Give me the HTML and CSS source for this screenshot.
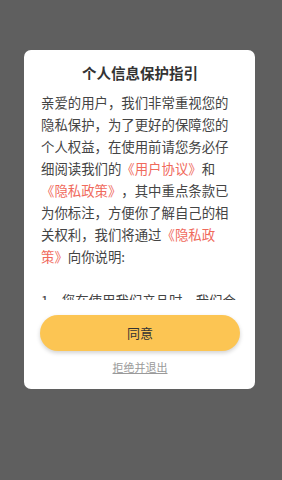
FILE: index.html
```
<!DOCTYPE html>
<html lang="zh-CN">
<head>
    <meta charset="utf-8">
    <title>个人信息保护指引</title>
    <link rel="stylesheet" href="styles.css">
</head>
<body>
<div class="dialog">
    <div class="title">个人信息保护指引</div>
    <div class="content">
        亲爱的用户，我们非常重视您的隐私保护，为了更好的保障您的个人权益，在使用前请您务必仔细阅读我们的<span class="link">《用户协议》</span>和<span class="link">《隐私政策》</span>，其中重点条款已为你标注，方便你了解自己的相关权利，我们将通过<span class="link">《隐私政策》</span>向你说明:<br><br>
        1、您在使用我们产品时，我们会收集、使用您的设备信息及位置信息，用于提供基础服务。<br>
        2、未经您的同意，我们不会向第三方提供您的个人信息。
    </div>
    <div class="agree">同意</div>
    <div class="refuse"><span>拒绝并退出</span></div>
</div>
</body>
</html>
```

FILE: styles.css
```
body{
    margin: 0;
    background: #5f5f5f;
    font-family: "Noto Sans CJK SC", "Noto Sans", sans-serif;
}
.dialog{
    width: 231px;
    height: 339px;
    margin: 50px 0 0 24px;
    padding: 12px 15px 0 16px;
    box-sizing: border-box;
    background: #fff;
    border-radius: 7px;
}
.title{
    font-size: 14.5px;
    line-height: 22px;
    font-weight: bold;
    color: #333;
    text-align: center;
}
.content{
    height: 209px;
    margin-top: 7px;
    padding-left: 1px;
    overflow: hidden;
    font-size: 13.4px;
    line-height: 22px;
    color: #444;
    text-spacing-trim: space-all;
}
.link{
    color: #f06a5c;
}
.agree{
    height: 36px;
    margin-top: 15px;
    border-radius: 18px;
    background: #fcc553;
    box-shadow: 0 2px 4px rgba(0,0,0,0.18);
    font-size: 13px;
    line-height: 36px;
    text-align: center;
    color: #333;
}
.refuse{
    margin-top: 8px;
    font-size: 11px;
    line-height: 16px;
    text-align: center;
    color: #9a9a9a;
}
.refuse span{
    text-decoration: underline;
}
```
